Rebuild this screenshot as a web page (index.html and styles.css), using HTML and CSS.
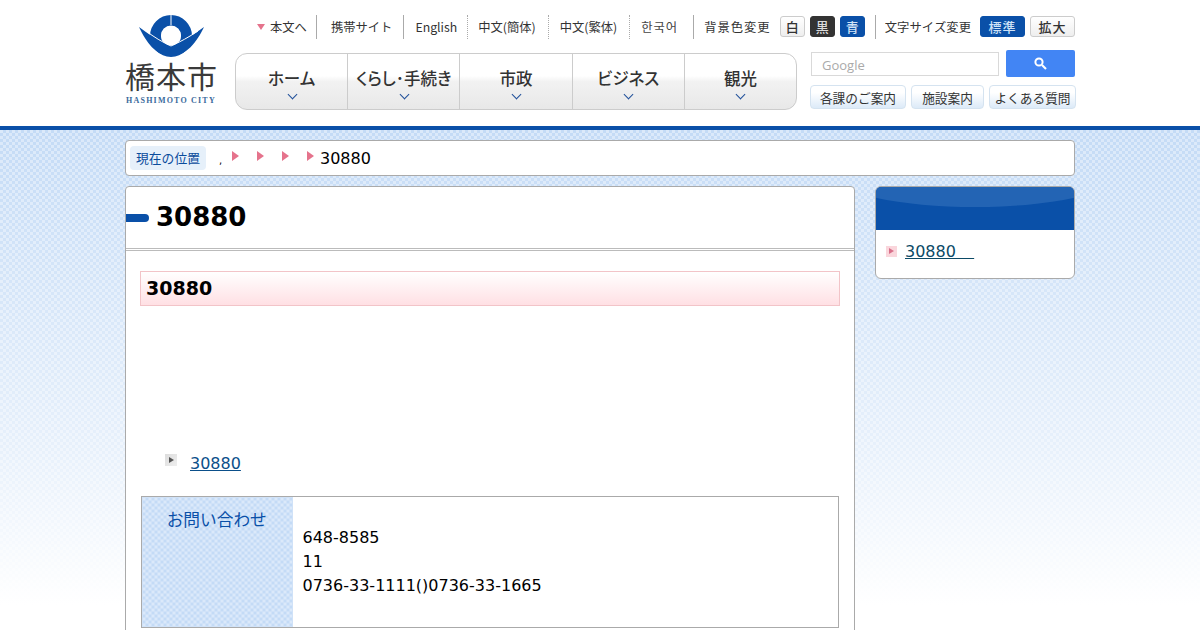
FILE: index.html
```html
<!DOCTYPE html>
<html lang="ja">
<head>
  <meta charset="UTF-8">
  <title>30880 | 橋本市</title>
  <link rel="stylesheet" href="styles.css">
</head>
<body>
  <header class="site-head">
    <div class="wrap head-inner">
      <a class="logo" href="#">
        <svg class="logo-mark" width="66" height="42" viewBox="139 15 66 42">
          <path fill="#0a50a8" d="M139 27C147 33 158 41 171 44C184 41 196 33 204 27C197 42 186 56 171 56C156 56 146 42 139 27Z"/>
          <circle cx="171" cy="36" r="15.5" fill="none" stroke="#0a50a8" stroke-width="11"/>
          <path fill="none" stroke="#fff" stroke-width="1" d="M171 15V25M146 31C154 37 162 42 171 46C180 42 189 37 198 31"/>
          <circle cx="171" cy="35.5" r="10" fill="#fff"/>
        </svg>
        <span class="logo-name">橋本市</span>
        <span class="logo-en">HASHIMOTO CITY</span>
      </a>
      <div class="head-main">
        <div class="util">
          <a class="util-link skip" href="#"><i class="tri-down"></i>本文へ</a>
          <a class="util-link solid mobile" href="#">携帯サイト</a>
          <a class="util-link dotted en" href="#">English</a>
          <a class="util-link dotted zh" href="#">中文(簡体)</a>
          <a class="util-link dotted" href="#">中文(繁体)</a>
          <a class="util-link solid kr" href="#">한국어</a>
          <div class="switch switch-color">
            <span>背景色変更</span>
            <a class="chip" href="#">白</a>
            <a class="chip chip-black" href="#">黒</a>
            <a class="chip chip-blue" href="#">青</a>
          </div>
          <div class="switch switch-size">
            <span>文字サイズ変更</span>
            <a class="chip wide chip-blue" href="#">標準</a>
            <a class="chip wide" href="#">拡大</a>
          </div>
        </div>
        <div class="head-row">
          <nav class="gnav">
            <a href="#">ホーム</a>
            <a href="#">くらし･手続き</a>
            <a href="#">市政</a>
            <a href="#">ビジネス</a>
            <a href="#">観光</a>
          </nav>
          <div class="head-side">
            <form class="search">
              <div class="search-box">Google</div>
              <div class="search-btn">
                <svg width="13" height="13" viewBox="0 0 13 13"><circle cx="5" cy="5" r="3.6" fill="none" stroke="#fff" stroke-width="2"/><path d="M8 8l4 4" stroke="#fff" stroke-width="2.2"/></svg>
              </div>
            </form>
            <div class="quick">
              <a href="#" class="q1">各課のご案内</a>
              <a href="#" class="q2">施設案内</a>
              <a href="#" class="q3">よくある質問</a>
            </div>
          </div>
        </div>
      </div>
    </div>
  </header>

  <div class="page">
    <div class="wrap">
      <div class="crumbs">
        <span class="crumbs-label">現在の位置</span>
        <span class="crumbs-comma">,</span>
        <i class="tri-right"></i><i class="tri-right"></i><i class="tri-right"></i><i class="tri-right"></i>
        <span>30880</span>
      </div>
      <div class="cols">
        <main class="card">
          <h1 class="page-title">30880</h1>
          <div class="card-body">
            <h2 class="sub-title">30880</h2>
            <p class="file-row"><i class="file-icon"></i><a href="#">30880</a></p>
            <table class="contact">
              <tr>
                <th>お問い合わせ</th>
                <td>
                  <p>648-8585</p>
                  <p>11</p>
                  <p>0736-33-1111()0736-33-1665</p>
                </td>
              </tr>
            </table>
          </div>
        </main>
        <aside class="side">
          <div class="side-head"></div>
          <div class="side-body"><i class="side-icon"></i><a href="#">30880&nbsp;&nbsp;&nbsp;</a></div>
        </aside>
      </div>
    </div>
  </div>
</body>
</html>
```

FILE: styles.css
```css
* { box-sizing: border-box; }
html { overflow: hidden; }
body { margin: 0; background: #fff; color: #000; font-family: "DejaVu Sans", "Noto Sans CJK JP", sans-serif; font-size: 16px; }
a { color: inherit; text-decoration: none; }
p { margin: 0; }
i { display: block; }
.wrap { width: 950px; margin: 0 auto; }

/* header */
.site-head { height: 130px; border-bottom: 4px solid #0a50a8; font-family: "Noto Sans CJK JP", sans-serif; }
.head-inner { display: flex; }
.logo { flex: none; width: 110px; padding-top: 15px; display: flex; flex-direction: column; align-items: flex-start; }
.logo-mark { display: block; margin-left: 14px; }
.logo-name { width: 92px; margin-top: 1px; font-size: 30px; line-height: 34px; font-weight: 400; letter-spacing: 1px; color: #3a3a3a; white-space: nowrap; }
.logo-en { width: 92px; margin-top: 5px; text-align: center; font-family: "Liberation Serif", serif; font-weight: bold; font-size: 8px; line-height: 8px; letter-spacing: 1.2px; color: #3a6a9c; white-space: nowrap; }
.head-main { flex: 1; min-width: 0; }
.util { height: 53px; padding: 15px 0 0 22px; display: flex; align-items: flex-start; font-size: 12.3px; color: #333; }
.util-link { height: 24px; line-height: 24px; padding: 0 12px 0 11px; white-space: nowrap; }
.util-link.solid { border-right: 1px solid #aaa; }
.util-link.dotted { border-right: 1px dotted #aaa; }
.util-link.mobile { padding: 0 11px 0 14px; }
.util-link.en { padding-right: 10px; }
.util-link.zh { padding-left: 10px; }
.util-link.skip { display: flex; align-items: center; padding: 0 9px 0 0; border-right: 1px solid #aaa; }
.tri-down { width: 0; height: 0; margin-right: 5px; border: 4px solid transparent; border-top: 6px solid #e5738c; border-bottom: 0; }
.util-link.kr { padding: 0 15px 0 11px; letter-spacing: 1px; font-family: "Noto Sans CJK KR", sans-serif; color: #444; }
.switch { display: flex; align-items: center; height: 24px; white-space: nowrap; }
.switch-color { padding: 0 10px; border-right: 1px solid #aaa; }
.switch-color span { margin-right: 9px; letter-spacing: 1px; }
.switch-size { padding-left: 9px; }
.switch-size span { margin-right: 9px; letter-spacing: .1px; }
.chip { width: 25px; height: 21px; margin-right: 5px; margin-top: -1px; text-align: center; font-size: 13px; line-height: 19px; border: 1px solid #ccc; border-radius: 3px; background: linear-gradient(#fff, #eee); color: #333; font-weight: 500; }
.chip:last-child { margin-right: 0; }
.chip-black { background: #333; border-color: #333; color: #ddd; }
.chip-blue { background: #0a50a8; border-color: #0a50a8; color: #cfe2f7; }
.chip.wide { width: 45px; letter-spacing: 1px; }
.head-row { display: flex; justify-content: space-between; align-items: flex-start; }
.gnav { width: 562px; height: 57px; display: flex; border: 1px solid #ccc; border-radius: 12px; background: linear-gradient(#fff 0, #fff 40%, #f2f2f2 50%, #e8e8e8 100%); }
.gnav a { position: relative; flex: 1; padding-top: 10px; text-align: center; font-size: 16.5px; line-height: 28px; font-weight: 500; font-feature-settings: "palt"; color: #333; white-space: nowrap; border-right: 1px solid #ccc; }
.gnav a:last-child { border-right: 0; }
.gnav a::after { content: ""; position: absolute; left: 50%; top: 37px; width: 6px; height: 6px; margin-left: -3px; border-right: 1.5px solid #1f4f9a; border-bottom: 1.5px solid #1f4f9a; transform: rotate(45deg); }
.head-side { width: 265px; margin-top: -3px; }
.search { display: flex; justify-content: space-between; align-items: center; padding-left: 1px; }
.search-box { width: 188px; height: 24px; padding-left: 10px; border: 1px solid #d9d9d9; font-family: "Open Sans", sans-serif; font-size: 13px; line-height: 25px; color: #aaa; }
.search-btn { width: 69px; height: 27px; display: flex; align-items: center; justify-content: center; border-radius: 2px; background: #4285f4; }
.quick { display: flex; gap: 5px; margin-top: 8px; margin-right: -1px; }
.quick a { height: 24px; text-align: center; font-size: 12.7px; line-height: 23px; color: #333; white-space: nowrap; border: 1px solid #d5e3f0; border-radius: 4px; background: linear-gradient(#fff 30%, #dceaf8); }
.q1 { width: 96px; }
.q2 { width: 73px; }
.q3 { width: 87px; }

/* page */
.page { padding: 10px 0 40px; min-height: 500px; background: linear-gradient(rgba(255,255,255,0), rgba(255,255,255,.6) 55%, #fff 82%), repeating-conic-gradient(#c4dbf6 0 25%, #dbe9fa 0 50%) 0 0 / 6px 6px; }
.crumbs { height: 36px; padding: 5px 4px; display: flex; align-items: center; border: 1px solid #aaa; border-radius: 4px; background: #fff; }
.crumbs-label { width: 76px; height: 24px; text-align: center; font-family: "Noto Sans CJK JP", sans-serif; font-size: 12.8px; line-height: 24px; color: #0a4c9c; background: #e6f0fa; border-radius: 4px; }
.crumbs-comma { width: 26px; padding: 4px 0 0 13px; font-size: 10px; }
.tri-right { width: 0; height: 0; margin-right: 18px; margin-top: -5px; border: 5.5px solid transparent; border-left: 7px solid #e5738c; border-right: 0; }
.crumbs .tri-right:last-of-type { margin-right: 6px; }
.cols { display: flex; justify-content: space-between; align-items: flex-start; margin-top: 10px; }
.card { width: 730px; padding-bottom: 40px; background: #fff; border: 1px solid #aaa; border-radius: 4px; }
.page-title { position: relative; height: 64px; margin: 0; padding-left: 30px; font-size: 26px; line-height: 60px; border-bottom: 3px double #bbb; }
.page-title::before { content: ""; position: absolute; left: 0; top: 27px; width: 23px; height: 8px; background: #0a50a8; border-radius: 0 4px 4px 0; }
.card-body { padding: 20px 14px 0; }
.sub-title { height: 35px; margin: 0; padding-left: 5px; font-size: 19px; line-height: 33px; border: 1px solid #f2c4c8; background: linear-gradient(#fff, #ffe0e4); }
.file-row { display: flex; align-items: center; margin: 145px 0 0 25px; height: 24px; }
.file-row a { color: #0b4f8a; text-decoration: underline; }
.file-icon { width: 12px; height: 12px; margin: -6px 13px 0 0; background: linear-gradient(135deg, #ddd, #eee); position: relative; }
.file-icon::after { content: ""; position: absolute; left: 4px; top: 3px; border: 3px solid transparent; border-left: 5px solid #555; border-right: 0; }
.contact { width: 698px; height: 132px; margin: 21px 0 0 1px; border-collapse: collapse; border: 1px solid #aaa; }
.contact th { width: 151px; padding: 8px 1px 0 0; vertical-align: top; text-align: center; font-family: "Noto Sans CJK JP", sans-serif; font-weight: normal; font-size: 16.7px; line-height: 28px; color: #0a50a8; background: repeating-conic-gradient(#c4dbf6 0 25%, #dbe9fa 0 50%) 0 0 / 6px 6px; }
.contact td { padding: 29px 10px 0; vertical-align: top; line-height: 24px; }
.side { width: 200px; border: 1px solid #aaa; border-radius: 6px; background: #fff; overflow: hidden; }
.side-head { position: relative; height: 43px; overflow: hidden; background: #0a50a8; }
.side-head::before { content: ""; position: absolute; left: -40px; right: -40px; top: -42px; height: 62px; border-radius: 50%; background: #2364b4; }
.side-body { height: 48px; padding: 0 0 5px 10px; display: flex; align-items: center; }
.side-body a { color: #0b4a66; text-decoration: underline; white-space: pre; word-spacing: 1px; }
.side-icon { position: relative; width: 11px; height: 11px; margin: 0 8px 0 0; background: #fad6dc; }
.side-icon::after { content: ""; position: absolute; left: 3px; top: 2px; border: 3.5px solid transparent; border-left: 5px solid #d8708a; border-right: 0; }
```
